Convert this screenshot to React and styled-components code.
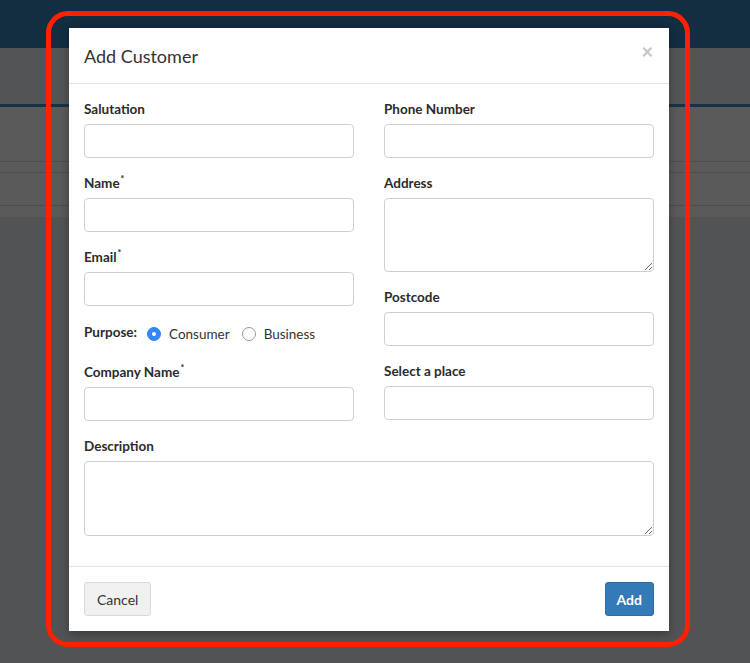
import React from 'react'
import styled, { createGlobalStyle } from 'styled-components'

const GlobalStyle = createGlobalStyle`
	html, body {
		margin: 0;
		padding: 0;
		background: #525355;
		font-family: Lato, "Open Sans", sans-serif;
		color: #333;
	}
	* { box-sizing: border-box; }
`

const Page = styled.div`
	position: relative;
	width: 750px;
	height: 663px;
	overflow: hidden;
	background: #525355;
`

const Navbar = styled.div`
	height: 48px;
	background: #132d41;
`

const SubHeader = styled.div`
	height: 59px;
	background: #525456;
	border-bottom: 3px solid #183245;
`

const Panel = styled.div`
	background: #5a5a5a;
`

const PanelRow = styled.div`
	height: ${p => p.$h}px;
	border-bottom: ${p => (p.$line ? '1px solid #4c4c4e' : 'none')};
`

const Overlay = styled.div`
	position: absolute;
	inset: 0;
	display: flex;
	justify-content: flex-start;
	align-items: flex-start;
	padding: 28px 0 0 69px;
`

const Highlight = styled.div`
	position: absolute;
	left: 46px;
	top: 11px;
	width: 644px;
	height: 636px;
	border: 5px solid #ff2000;
	border-radius: 22px;
	pointer-events: none;
`

const Modal = styled.div`
	width: 600px;
	background: #fff;
	box-shadow: 0 3px 9px rgba(0, 0, 0, 0.3);
`

const Header = styled.div`
	display: flex;
	align-items: center;
	justify-content: space-between;
	height: 56px;
	padding: 0 15px;
	border-bottom: 1px solid #e5e5e5;
`

const Title = styled.h4`
	margin: 0;
	font-size: 18px;
	font-weight: 400;
	color: #333;
	padding-top: 1px;
`

const Close = styled.span`
	font-size: 20px;
	font-weight: 700;
	color: #c4c4c4;
	line-height: 1;
	margin-top: -10px;
	margin-right: 1px;
`

const Body = styled.div`
	padding: 15px;
`

const Columns = styled.div`
	display: grid;
	grid-template-columns: 270px 270px;
	column-gap: 30px;
`

const Group = styled.div`
	margin-bottom: 15px;
`

const Label = styled.label`
	display: block;
	font-size: 13.5px;
	font-weight: 700;
	line-height: 20px;
	margin-bottom: 5px;
	color: #2b2b2b;

	sup {
		font-size: 9px;
		vertical-align: top;
		line-height: 12px;
		margin-left: 1px;
	}
`

const Input = styled.input`
	display: block;
	width: 100%;
	height: 34px;
	border: 1px solid #ccd0d6;
	border-radius: 4px;
	padding: 6px 12px;
	font-family: inherit;
	font-size: 14px;
	background: #fff;
	outline: none;
`

const TextArea = styled.textarea`
	display: block;
	width: 100%;
	height: ${p => p.$h || 74}px;
	border: 1px solid #ccd0d6;
	border-radius: 4px;
	padding: 6px 12px;
	font-family: inherit;
	font-size: 14px;
	background: #fff;
	outline: none;
	resize: vertical;
`

const RadioRow = styled.div`
	display: flex;
	align-items: center;
	height: 26px;
	margin-bottom: 15px;
	font-size: 13.5px;

	> b {
		color: #2b2b2b;
		margin-right: 10px;
		margin-top: -4px;
	}
`

const RadioOption = styled.label`
	display: flex;
	align-items: center;
	gap: 8px;
	margin-right: 12px;
	color: #333;
`

const Radio = styled.span`
	width: 14px;
	height: 14px;
	border-radius: 50%;
	display: inline-flex;
	align-items: center;
	justify-content: center;
	background: ${p => (p.$checked ? '#2f88f5' : '#fff')};
	border: 1px solid ${p => (p.$checked ? '#2f88f5' : '#9a9a9a')};

	&::after {
		content: '';
		width: 4px;
		height: 4px;
		border-radius: 50%;
		background: ${p => (p.$checked ? '#fff' : 'transparent')};
	}
`

const Footer = styled.div`
	display: flex;
	justify-content: space-between;
	padding: 15px;
	border-top: 1px solid #e5e5e5;
`

const Button = styled.button`
	height: 34px;
	padding: 0 ${p => (p.$primary ? 11 : 12)}px;
	font-family: inherit;
	font-size: 14px;
	border-radius: 3px;
	cursor: pointer;
	font-weight: ${p => (p.$primary ? 700 : 400)};
	color: ${p => (p.$primary ? '#fff' : '#333')};
	background: ${p => (p.$primary ? '#337ab7' : '#f0f0f0')};
	border: 1px solid ${p => (p.$primary ? '#2e6da4' : '#d9d9d9')};
`

function Field({ label, required, area, h }) {
	return (
		<Group>
			<Label>
				{label}
				{required && <sup>*</sup>}
			</Label>
			{area ? <TextArea $h={h} /> : <Input type="text" />}
		</Group>
	)
}

export default function App() {
	return (
		<Page>
			<GlobalStyle />
			<Navbar />
			<SubHeader />
			<Panel>
				<PanelRow $h={55} $line />
				<PanelRow $h={11} $line />
				<PanelRow $h={33} $line />
				<PanelRow $h={11} />
			</Panel>

			<Overlay>
				<Modal>
					<Header>
						<Title>Add Customer</Title>
						<Close>×</Close>
					</Header>
					<Body>
						<Columns>
							<div>
								<Field label="Salutation" />
								<Field label="Name" required />
								<Field label="Email" required />
								<RadioRow>
									<b>Purpose:</b>
									<RadioOption>
										<Radio $checked />
										Consumer
									</RadioOption>
									<RadioOption>
										<Radio />
										Business
									</RadioOption>
								</RadioRow>
								<Field label="Company Name" required />
							</div>
							<div>
								<Field label="Phone Number" />
								<Field label="Address" area h={74} />
								<Field label="Postcode" />
								<Field label="Select a place" />
							</div>
						</Columns>
						<Field label="Description" area h={75} />
					</Body>
					<Footer>
						<Button>Cancel</Button>
						<Button $primary>Add</Button>
					</Footer>
				</Modal>
			</Overlay>
			<Highlight />
		</Page>
	)
}
